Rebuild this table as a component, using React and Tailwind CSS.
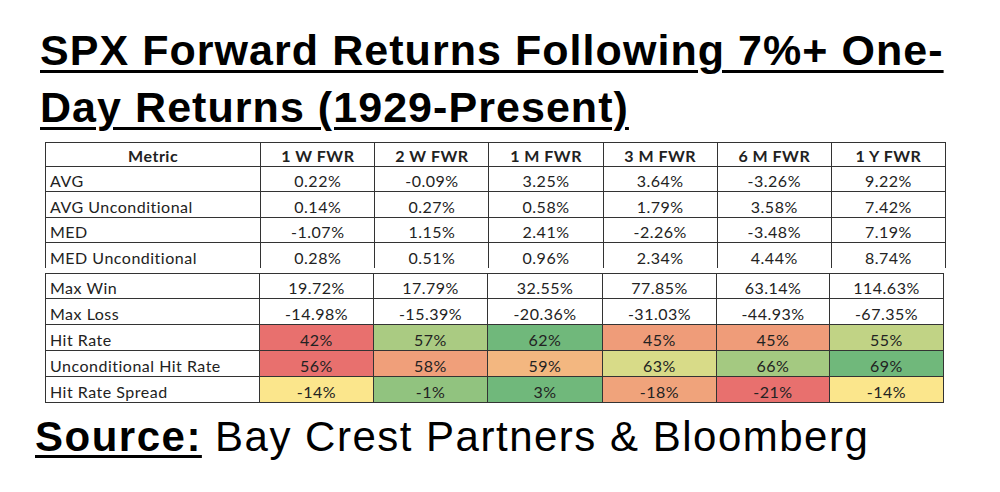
import React from "react";

const cols = ["1 W FWR", "2 W FWR", "1 M FWR", "3 M FWR", "6 M FWR", "1 Y FWR"];

const topRows = [
  ["AVG", "0.22%", "-0.09%", "3.25%", "3.64%", "-3.26%", "9.22%"],
  ["AVG Unconditional", "0.14%", "0.27%", "0.58%", "1.79%", "3.58%", "7.42%"],
  ["MED", "-1.07%", "1.15%", "2.41%", "-2.26%", "-3.48%", "7.19%"],
  ["MED Unconditional", "0.28%", "0.51%", "0.96%", "2.34%", "4.44%", "8.74%"],
];

const plainRows = [
  ["Max Win", "19.72%", "17.79%", "32.55%", "77.85%", "63.14%", "114.63%"],
  ["Max Loss", "-14.98%", "-15.39%", "-20.36%", "-31.03%", "-44.93%", "-67.35%"],
];

const heatRows = [
  ["Hit Rate", [42, 57, 62, 45, 45, 55]],
  ["Unconditional Hit Rate", [56, 58, 59, 63, 66, 69]],
  ["Hit Rate Spread", [-14, -1, 3, -18, -21, -14]],
];

const RED = [232, 112, 110];
const YEL = [251, 230, 140];
const GRN = [112, 184, 123];

function mix(a, b, t) {
  return `rgb(${a.map((v, i) => Math.round(v + (b[i] - v) * t)).join(",")})`;
}

// excel style 3 colour scale: min red, median yellow, max green
function heat(vals) {
  const s = [...vals].sort((a, b) => a - b);
  const min = s[0];
  const max = s[s.length - 1];
  const mid = (s[2] + s[3]) / 2;
  return vals.map((v) =>
    v <= mid ? mix(RED, YEL, (v - min) / (mid - min)) : mix(YEL, GRN, (v - mid) / (max - mid))
  );
}

const cell = "border border-[#333] text-center align-bottom p-0 pb-[1px]";
const label = "border border-[#333] text-left align-bottom p-0 pl-[4px] pb-[1px]";

export default function App() {
  return (
    <div className="w-[1000px] h-[492px] bg-white overflow-hidden">
      <h1
        className="pl-[40px] pt-[22px] text-[43px] leading-[57px] font-bold text-black tracking-[1.05px]"
        style={{ fontFamily: '"Liberation Sans", Arial, sans-serif' }}
      >
        <span className="underline decoration-[3px] underline-offset-[5px]">
          SPX Forward Returns Following 7%+ One-
          <br />
          Day Returns (1929-Present)
        </span>
      </h1>

      <div
        className="ml-[45px] mt-[6px] text-[16px] leading-[19px] tracking-[0.5px] text-[#222]"
        style={{ fontFamily: 'Lato, "Open Sans", sans-serif' }}
      >
        <table className="table-fixed border-collapse w-[901px]">
          <colgroup>
            <col className="w-[215px]" />
            {cols.map((c) => (
              <col key={c} className="w-[114px]" />
            ))}
          </colgroup>
          <thead>
            <tr className="h-[24px]">
              <th className={cell + " font-bold"}>Metric</th>
              {cols.map((c) => (
                <th key={c} className={cell + " font-bold"}>
                  {c}
                </th>
              ))}
            </tr>
          </thead>
          <tbody>
            {topRows.map((r, i) => (
              <tr key={r[0]} className="h-[25.3px]">
                <td className={label + (i === topRows.length - 1 ? " border-b-0" : "")}>{r[0]}</td>
                {r.slice(1).map((v, j) => (
                  <td key={j} className={cell + (i === topRows.length - 1 ? " border-b-0" : "")}>
                    {v}
                  </td>
                ))}
              </tr>
            ))}
          </tbody>
        </table>

        <table className="table-fixed border-collapse w-[898px] mt-[5px]">
          <colgroup>
            <col className="w-[214px]" />
            <col className="w-[114px]" />
            <col className="w-[114px]" />
            <col className="w-[115px]" />
            <col className="w-[114px]" />
            <col className="w-[113px]" />
            <col className="w-[114px]" />
          </colgroup>
          <tbody>
            {plainRows.map((r) => (
              <tr key={r[0]} className="h-[25.8px]">
                <td className={label}>{r[0]}</td>
                {r.slice(1).map((v, j) => (
                  <td key={j} className={cell}>
                    {v}
                  </td>
                ))}
              </tr>
            ))}
            {heatRows.map(([name, vals]) => {
              const colors = heat(vals);
              return (
                <tr key={name} className="h-[25.8px]">
                  <td className={label}>{name}</td>
                  {vals.map((v, j) => (
                    <td key={j} className={cell} style={{ backgroundColor: colors[j] }}>
                      {v}%
                    </td>
                  ))}
                </tr>
              );
            })}
          </tbody>
        </table>
      </div>

      <p
        className="pl-[35px] mt-[10px] text-[42px] leading-[48px] text-black tracking-[1.5px]"
        style={{ fontFamily: '"Liberation Sans", Arial, sans-serif' }}
      >
        <span className="font-bold underline decoration-[3px] underline-offset-[4px]">Source:</span> Bay Crest
        Partners &amp; Bloomberg
      </p>
    </div>
  );
}
